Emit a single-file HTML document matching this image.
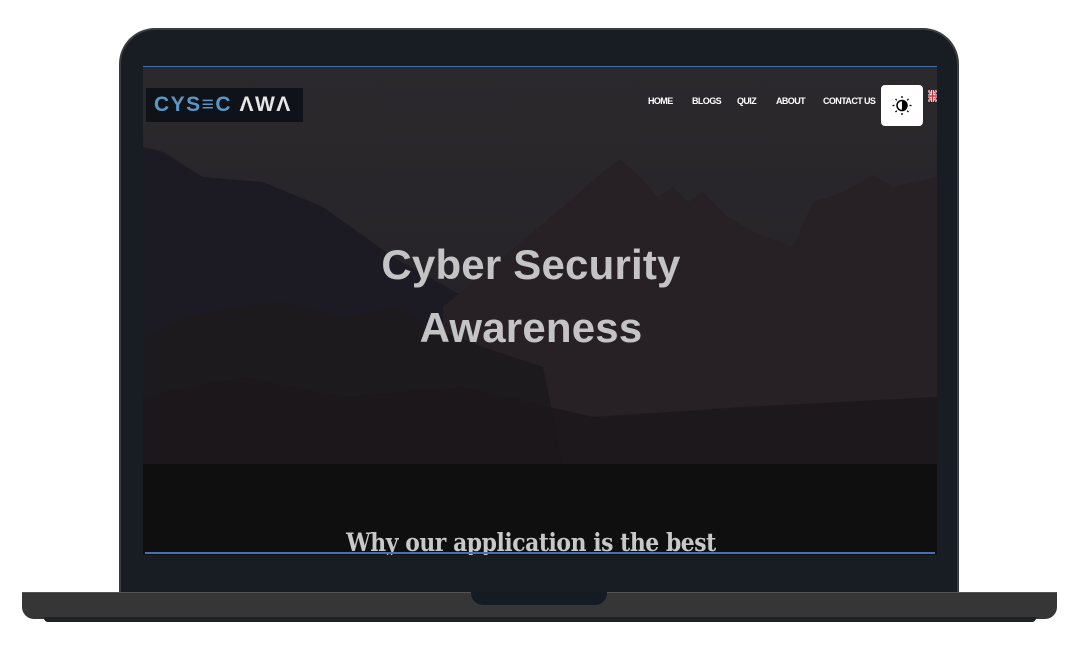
<!DOCTYPE html>
<html><head><meta charset="utf-8"><style>
body{margin:0;width:1080px;height:663px;background:#fff;position:relative;overflow:hidden;font-family:"Liberation Sans",sans-serif}
.bezel{position:absolute;left:119px;top:28px;width:840px;height:566px;background:#171d23;border-radius:36px 36px 0 0;border:2px solid #3a3d40;border-bottom:none;box-sizing:border-box}
.screen{position:absolute;left:143px;top:66px;width:794px;height:488px;background:#0f0f0f;overflow:hidden;border-top:1px solid #3f6fae}
.bline{position:absolute;left:145px;top:552px;width:790px;height:2px;background:#4a72a8}
.base{position:absolute;left:22px;top:592px;width:1035px;height:26px;background:#363636;border-radius:0 0 12px 12px;border-top:1px solid #555}
.foot{position:absolute;left:44px;top:617px;width:992px;height:5px;background:#1c2228;border-radius:0 0 4px 4px}
.notch{position:absolute;left:471px;top:592px;width:136px;height:13px;background:#151b22;border-radius:0 0 12px 12px}
.logo{position:absolute;left:3px;top:21px;width:157px;height:34px;background:#0f1218;font-weight:bold;font-size:21px;letter-spacing:1.5px;line-height:34px;padding-left:8px;box-sizing:border-box}
.nav{position:absolute;top:29px;font-size:9px;color:#fff;font-weight:bold;letter-spacing:-0.6px}
.tog{position:absolute;left:738px;top:18px;width:42px;height:41px;background:#fff;border-radius:4px}
h1{position:absolute;left:-9px;width:794px;top:166px;margin:0;text-align:center;color:#c4c4c4;font-size:42px;line-height:63px;font-weight:bold;letter-spacing:0.2px}
h2{position:absolute;left:-9px;width:794px;top:461px;margin:0;text-align:center;color:#c8c8c8;font-family:"DejaVu Serif",serif;font-size:25px;font-weight:bold;letter-spacing:-0.5px;transform:scaleX(0.875)}
</style></head><body>
<div class="bezel"></div>
<div class="screen">
<svg width="794" height="397" style="position:absolute;left:0;top:0">
<defs><linearGradient id="sky" x1="0" y1="0" x2="0" y2="1"><stop offset="0" stop-color="#2b292c"/><stop offset="1" stop-color="#222025"/></linearGradient></defs>
<rect width="794" height="397" fill="url(#sky)"/>
<path d="M0 80 L20 85 L60 110 L120 115 L180 140 L250 190 L330 235 L380 260 L380 397 L0 397Z" fill="#1c1b24"/>
<path d="M300 240 L360 190 L420 140 L460 105 L477 92 L495 108 L515 130 L530 120 L545 135 L560 125 L585 150 L610 165 L650 180 L670 135 L700 125 L730 108 L750 120 L794 110 L794 397 L300 397Z" fill="#272024"/>
<path d="M0 270 L40 250 L90 240 L140 235 L200 250 L250 240 L300 265 L340 280 L400 300 L420 397 L0 397Z" fill="#1d1a1d"/>
<path d="M0 330 L100 310 L200 330 L320 320 L450 350 L600 340 L794 330 L794 397 L0 397Z" fill="#1b181b" opacity=".85"/>
</svg>
<div class="logo"><span style="color:#5b97c4">CYS&#x2261;C</span> <span style="color:#e6e6e6">&#x39B;W&#x39B;</span></div>
<div class="nav" style="left:505px">HOME</div>
<div class="nav" style="left:549px">BLOGS</div>
<div class="nav" style="left:594px">QUIZ</div>
<div class="nav" style="left:633px">ABOUT</div>
<div class="nav" style="left:680px">CONTACT US</div>
<div class="tog"><svg width="42" height="41" viewBox="0 0 42 41"><circle cx="21" cy="20.5" r="5" fill="none" stroke="#000" stroke-width="1.5"/><path d="M21 15.5 A5 5 0 0 1 21 25.5Z" fill="#000"/><g stroke="#000" stroke-width="1.3"><line x1="21" y1="11" x2="21" y2="13"/><line x1="21" y1="28" x2="21" y2="30"/><line x1="11.5" y1="20.5" x2="13.5" y2="20.5"/><line x1="28.5" y1="20.5" x2="30.5" y2="20.5"/><line x1="14.5" y1="14" x2="15.8" y2="15.3"/><line x1="26.2" y1="25.7" x2="27.5" y2="27"/><line x1="27.5" y1="14" x2="26.2" y2="15.3"/><line x1="14.5" y1="27" x2="15.8" y2="25.7"/></g></svg></div>
<div style="position:absolute;left:785px;top:22px;width:9px;height:12px;background:#2a2f5a"><svg width="9" height="12"><path d="M0 0L9 12M9 0L0 12" stroke="#fff" stroke-width="2"/><path d="M0 0L9 12M9 0L0 12" stroke="#c33" stroke-width=".8"/><path d="M4.5 0V12M0 6H9" stroke="#fff" stroke-width="3"/><path d="M4.5 0V12M0 6H9" stroke="#c33" stroke-width="1.5"/></svg></div>
<h1>Cyber Security<br>Awareness</h1>
<h2>Why our application is the best</h2>
</div>
<div class="bline"></div>
<div class="base"></div>
<div class="foot"></div>
<div class="notch"></div>
</body></html>
